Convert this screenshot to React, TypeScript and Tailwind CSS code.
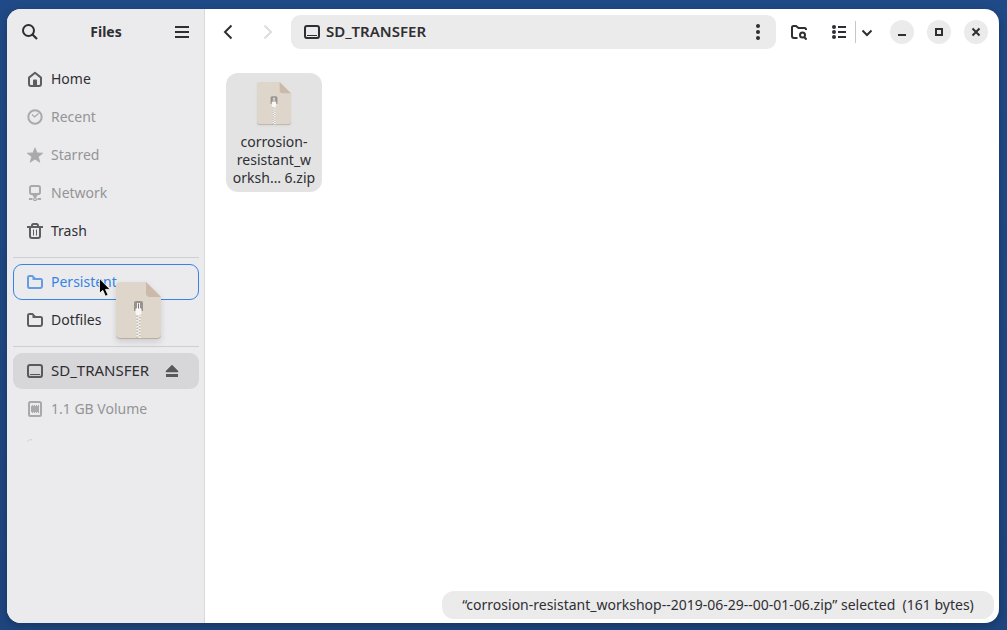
import React from "react";

type IconProps = { className?: string };

const Svg = ({ className = "", children }: IconProps & { children: React.ReactNode }) => (
  <svg viewBox="0 0 16 16" className={`size-4 shrink-0 ${className}`} fill="none" stroke="currentColor" strokeWidth="2" aria-hidden="true">
    {children}
  </svg>
);

const SearchIcon = () => (
  <Svg>
    <circle cx="6.5" cy="6.5" r="5.5" />
    <path d="M10.5 10.5 15 15" strokeWidth="2.2" />
  </Svg>
);

const MenuIcon = () => (
  <Svg>
    <path d="M1 3h14M1 8h14M1 13h14" />
  </Svg>
);

const HomeIcon = () => (
  <Svg>
    <path d="M2 6.6 8 1.8l6 4.8V13a2 2 0 0 1-2 2H4a2 2 0 0 1-2-2z" strokeLinejoin="round" />
    <path d="M6 15V9.5A1 1 0 0 1 7 8.500h2a1 1 0 0 1 1 1V15z" fill="currentColor" stroke="none" />
  </Svg>
);

const RecentIcon = () => (
  <Svg>
    <circle cx="8" cy="8" r="6.700" strokeWidth="2" />
    <path d="m5 5.500 2.600 2.500L11.500 4.500" strokeWidth="1.2" />
  </Svg>
);

const StarIcon = () => (
  <Svg>
    <path
      d="M8 .8 10 5.900l5.700.3-4.400 3.500 1.500 5.500L8 12.100l-4.800 3.100 1.500-5.500L.3 6.200 6 5.900z"
      fill="currentColor"
      strokeWidth="0.8"
      strokeLinejoin="round"
    />
  </Svg>
);

const NetworkIcon = () => (
  <Svg>
    <rect x="3" y="1" width="10" height="8" rx="1.8" />
    <path d="M5 9.500h6L9.500 12h-3z" fill="currentColor" stroke="none" />
    <path d="M8 11v2" />
    <path d="M2 14h3.500M10.500 14H14" strokeWidth="2" />
    <circle cx="8" cy="14.200" r="1.400" strokeWidth="1.2" />
  </Svg>
);

const TrashIcon = () => (
  <Svg>
    <path d="M0 4h16" />
    <path d="M5 4V2.500A1.500 1.500 0 0 1 6.500 1h3A1.500 1.500 0 0 1 11 2.500V4" />
    <path d="M3 4v9a2 2 0 0 0 2 2h6a2 2 0 0 0 2-2V4" />
    <path d="M6.500 6.500v6M9.500 6.500v6" strokeWidth="1" />
  </Svg>
);

const FolderIcon = () => (
  <Svg>
    <path d="M5.500 5h8.300A1.200 1.200 0 0 1 15 6.200v6A1.800 1.800 0 0 1 13.200 14H2.800A1.800 1.800 0 0 1 1 12.200V3.500A1.500 1.500 0 0 1 2.500 2h2.800L8 4.800" />
  </Svg>
);

const DriveIcon = () => (
  <Svg>
    <rect x="1" y="2" width="14" height="12" rx="2" />
    <path d="M3 11.500h10" strokeWidth="1" />
    <path d="M1.500 13.700h13" strokeWidth="1.6" />
  </Svg>
);

const VolumeIcon = () => (
  <Svg>
    <rect x="2" y="1" width="12" height="14" rx="1.500" />
    <path d="M4 5h8v6H4z" fill="currentColor" stroke="none" />
    <path d="M5.500 4v8M7.500 4v8M9.500 4v8M11.500 4v8" strokeWidth="1" />
  </Svg>
);

const EjectIcon = () => (
  <Svg>
    <path d="M8 2 14 8v1H2V8z" fill="currentColor" strokeWidth="0.5" />
    <path d="M2 12.500h12" strokeWidth="3" />
  </Svg>
);

const BackIcon = () => (
  <Svg>
    <path d="M11.500 1.500 5 8l6.500 6.500" />
  </Svg>
);

const ForwardIcon = () => (
  <Svg>
    <path d="M4.500 1.500 11 8l-6.500 6.500" />
  </Svg>
);

const DotsIcon = () => (
  <Svg>
    <g fill="currentColor" stroke="none">
      <circle cx="8" cy="2" r="2" />
      <circle cx="8" cy="8" r="2" />
      <circle cx="8" cy="14" r="2" />
    </g>
  </Svg>
);

const FolderSearchIcon = () => (
  <Svg>
    <path d="M6.500 14H3a2 2 0 0 1-2-2V3.500A1.500 1.500 0 0 1 2.500 2H5l2.500 2h6A1.500 1.500 0 0 1 15 5.500V6" />
    <circle cx="11.500" cy="11" r="2.500" />
    <path d="m13 13 2.600 2.600" />
  </Svg>
);

const ListIcon = () => (
  <Svg>
    <g fill="currentColor" stroke="none">
      <circle cx="3" cy="3" r="2" />
      <circle cx="3" cy="8" r="2" />
      <circle cx="3" cy="13" r="2" />
    </g>
    <path d="M7 3h8M7 8h8M7 13h8" />
  </Svg>
);

const ChevronIcon = () => (
  <Svg>
    <path d="m3.500 6.500 4.500 4.500 4.500-4.500" />
  </Svg>
);

const ZipIcon = ({ className = "" }: IconProps) => (
  <svg viewBox="0 0 45 57" className={className} aria-hidden="true">
    <path d="M4 1h26l15 15v37a4 4 0 0 1-4 4H4a4 4 0 0 1-4-4V5a4 4 0 0 1 4-4z" fill="#b9aea3" />
    <path d="M4 0h26l15 15v37a4 4 0 0 1-4 4H4a4 4 0 0 1-4-4V4a4 4 0 0 1 4-4z" fill="#ded5cb" />
    <path d="M30 0 45 15H34a4 4 0 0 1-4-4z" fill="#ccb9a9" />
    <path d="M22.500 32v24" stroke="#c2bab1" strokeWidth="4" />
    <path d="M21.500 32v24" stroke="#f6f4f1" strokeWidth="2.500" strokeDasharray="1.500 1.500" />
    <path d="M23.500 33.500v22.500" stroke="#f6f4f1" strokeWidth="2.500" strokeDasharray="1.500 1.500" />
    <path d="M20 19h5a2 2 0 0 1 2 2v8h-9v-8a2 2 0 0 1 2-2z" fill="#96938e" />
    <path d="M21 21h3v5l1.500 1v4a2 2 0 0 1-2 2h-2a2 2 0 0 1-2-2v-4l1.500-1z" fill="#f8f7f5" />
    <path d="M22 21.500h1v5h-1z" fill="#77746f" />
  </svg>
);

type Tone = "normal" | "dim" | "drop" | "active";

const rowTone: Record<Tone, string> = {
  normal: "text-[#2f2f33] border-transparent",
  dim: "text-[#949496] border-transparent",
  drop: "text-[#3584e4] border-[#3584e4]",
  active: "text-[15px] text-[#2f2f33] border-transparent bg-[#d7d7d9]",
};

const PlaceRow = ({
  icon,
  label,
  tone = "normal",
  eject = false,
}: {
  icon: React.ReactNode;
  label: string;
  tone?: Tone;
  eject?: boolean;
}) => (
  <li className={`flex h-9 items-center rounded-[9px] border pr-[18px] ${rowTone[tone]}`}>
    <button type="button" className="flex h-full min-w-0 flex-1 items-center gap-2 pl-[13px] text-left whitespace-nowrap">
      <span className="opacity-75">{icon}</span>
      {label}
    </button>
    {eject && (
      <button type="button" aria-label="Eject" className="opacity-75">
        <EjectIcon />
      </button>
    )}
  </li>
);

const HeaderButton = ({
  label,
  className = "w-[34px]",
  disabled = false,
  children,
}: {
  label: string;
  className?: string;
  disabled?: boolean;
  children: React.ReactNode;
}) => (
  <button
    type="button"
    aria-label={label}
    disabled={disabled}
    className={`flex h-[34px] shrink-0 items-center justify-center disabled:text-[#dcdcdd] ${className}`}
  >
    {children}
  </button>
);

const WindowButton = ({ label, children }: { label: string; children: React.ReactNode }) => (
  <button type="button" aria-label={label} className="flex size-6 shrink-0 items-center justify-center rounded-full bg-[#ebebeb]">
    {children}
  </button>
);

const Sidebar = () => (
  <aside className="flex w-[198px] shrink-0 flex-col border-r border-[#d9d9db] bg-[#ebebed]">
    <header className="flex h-[46px] items-center justify-between pr-[5px] pl-1.5">
      <HeaderButton label="Search">
        <SearchIcon />
      </HeaderButton>
      <h1 className="text-sm font-bold">Files</h1>
      <HeaderButton label="Main menu">
        <MenuIcon />
      </HeaderButton>
    </header>
    <nav aria-label="Places" className="relative flex flex-col pt-1.5 pr-[5px] pl-1.5">
      <ul className="flex flex-col gap-0.5">
        <PlaceRow icon={<HomeIcon />} label="Home" />
        <PlaceRow icon={<RecentIcon />} label="Recent" tone="dim" />
        <PlaceRow icon={<StarIcon />} label="Starred" tone="dim" />
        <PlaceRow icon={<NetworkIcon />} label="Network" tone="dim" />
        <PlaceRow icon={<TrashIcon />} label="Trash" />
      </ul>
      <hr className="mt-2 mb-1.5 border-[#cfcfd1]" />
      <ul className="flex flex-col gap-0.5">
        <PlaceRow icon={<FolderIcon />} label="Persistent" tone="drop" />
        <PlaceRow icon={<FolderIcon />} label="Dotfiles" />
      </ul>
      <hr className="mt-2 mb-1.5 border-[#cfcfd1]" />
      <ul className="flex flex-col gap-0.5">
        <PlaceRow icon={<DriveIcon />} label="SD_TRANSFER" tone="active" eject />
        <PlaceRow icon={<VolumeIcon />} label="1.1 GB Volume" tone="dim" />
      </ul>
      <svg viewBox="0 0 8 3" className="mt-3 ml-[14px] h-[3px] w-2 text-[#cfcfd1]" fill="none" stroke="currentColor" aria-hidden="true">
        <path d="M.5 2.500C1.500 1 2.500.5 5 .8" />
      </svg>
      <ZipIcon className="pointer-events-none absolute top-[227px] left-[109px] h-[57px] w-[45px] drop-shadow-md" />
      <svg viewBox="0 0 12 19" className="pointer-events-none absolute top-[223px] left-[92px] h-[19px] w-3" aria-hidden="true">
        <path d="M.5.700v14.600l3.300-3 2.600 5.900 2.700-1.200-2.600-5.600h4.700z" fill="#000" stroke="#fff" strokeWidth="0.8" />
      </svg>
    </nav>
  </aside>
);

export default function App() {
  return (
    <div className="flex min-h-screen bg-linear-to-b from-[#204a87] to-[#1e457e] pt-[9px] pr-2 pb-[7px] pl-[7px] font-['Noto_Sans',sans-serif] text-sm text-[#2f2f33]">
      <div className="flex flex-1 overflow-hidden rounded-[14px] bg-white shadow-[0_2px_8px_rgba(0,0,0,0.25)]">
        <Sidebar />
        <main className="flex min-w-0 flex-1 flex-col">
          <header className="flex h-[46px] items-center pr-[11px] pl-1.5">
            <div className="flex gap-1.5">
              <HeaderButton label="Back">
                <BackIcon />
              </HeaderButton>
              <HeaderButton label="Forward" disabled>
                <ForwardIcon />
              </HeaderButton>
            </div>
            <div className="mx-1.5 flex h-[34px] min-w-0 flex-1 items-center rounded-[9px] bg-[#ebebeb] pl-[13px]">
              <button type="button" className="flex items-center gap-1.5 text-[15px] font-semibold">
                <DriveIcon />
                SD_TRANSFER
              </button>
              <HeaderButton label="Folder menu" className="ml-auto w-9">
                <DotsIcon />
              </HeaderButton>
            </div>
            <HeaderButton label="Search current folder">
              <FolderSearchIcon />
            </HeaderButton>
            <div className="ml-1.5 flex items-center">
              <HeaderButton label="List view" className="w-[33px]">
                <ListIcon />
              </HeaderButton>
              <span className="h-[22px] w-px bg-[#c6c6c7]" />
              <HeaderButton label="View options" className="w-[22px]">
                <ChevronIcon />
              </HeaderButton>
            </div>
            <div className="ml-3 flex gap-[13px]">
              <WindowButton label="Minimize">
                <Svg>
                  <path d="M4 11h8" />
                </Svg>
              </WindowButton>
              <WindowButton label="Maximize">
                <Svg>
                  <path d="M5 5h6v6H5z" />
                </Svg>
              </WindowButton>
              <WindowButton label="Close">
                <Svg>
                  <path d="m4.500 4.500 7 7M11.500 4.500l-7 7" />
                </Svg>
              </WindowButton>
            </div>
          </header>
          <section aria-label="Folder contents" className="flex-1 px-[21px] pt-[18px]">
            <button
              type="button"
              aria-pressed="true"
              className="flex w-24 flex-col items-center gap-2 rounded-xl bg-[#e3e3e3] px-1 pt-[9px] pb-[5px] text-center"
            >
              <ZipIcon className="h-[43px] w-[34px] drop-shadow-xs" />
              <span className="leading-[18px] whitespace-nowrap">
                corrosion-
                <br />
                resistant_w
                <br />
                orksh… 6.zip
              </span>
            </button>
          </section>
          <footer className="flex justify-end pr-[5px] pb-1">
            <p role="status" className="flex h-7 min-w-[552px] items-center justify-center rounded-xl bg-[#ebebeb] px-[11px] whitespace-pre">
              {"“corrosion-resistant_workshop--2019-06-29--00-01-06.zip” selected  (161 bytes)"}
            </p>
          </footer>
        </main>
      </div>
    </div>
  );
}
